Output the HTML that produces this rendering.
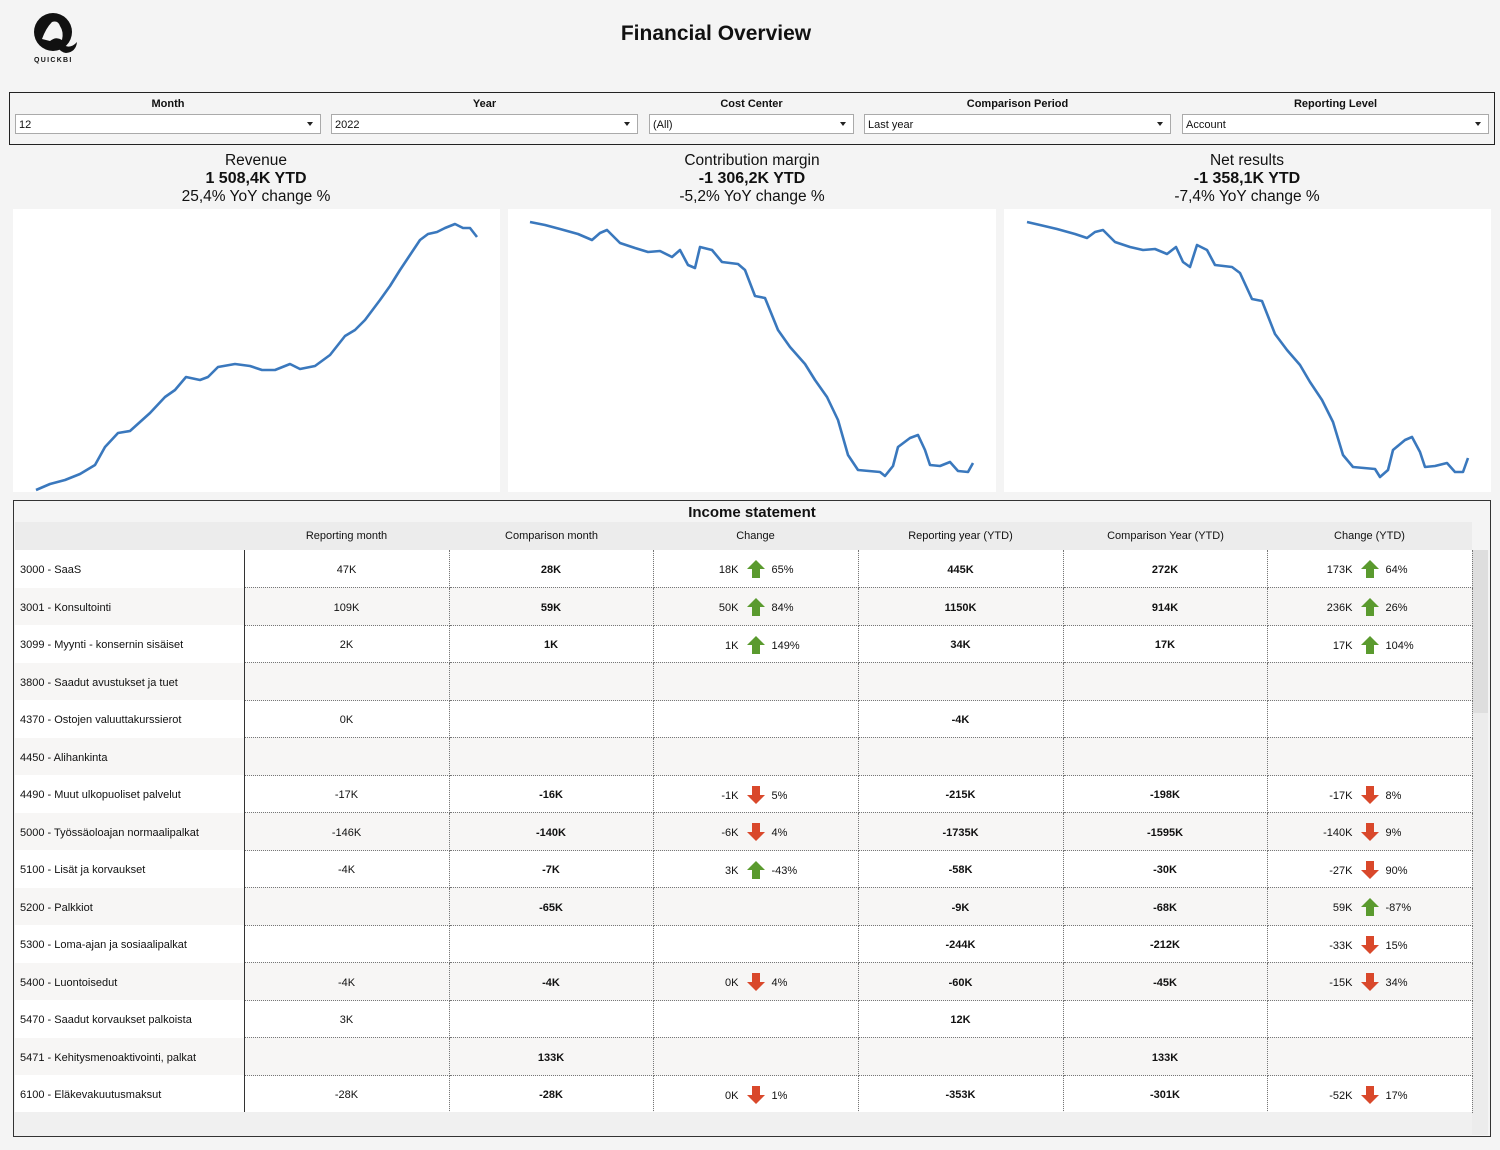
<!DOCTYPE html>
<html><head><meta charset="utf-8">
<style>
*{margin:0;padding:0;box-sizing:border-box}
body{width:1500px;height:1150px;background:#f4f4f4;font-family:"Liberation Sans","DejaVu Sans",sans-serif;color:#111;position:relative;overflow:hidden}
.abs{position:absolute}
.title{left:0;width:1432px;top:22px;text-align:center;font-weight:bold;font-size:21px}
.fbox{left:9px;top:92px;width:1486px;height:53px;border:1px solid #222;background:#f4f4f4}
.flab{position:absolute;top:5px;font-size:11px;font-weight:bold;text-align:center}
.dd{position:absolute;top:21px;height:20px;border:1px solid #aaa;background:#fff;font-size:11px;padding:4px 3px 0;}
.dd:after{content:"";position:absolute;right:7px;top:7px;border-left:3px solid transparent;border-right:3px solid transparent;border-top:4px solid #222}
.kpi{top:152px;width:400px;text-align:center;font-size:15.5px;line-height:18px}
.kpi b{font-size:16px}
.panel{top:209px;height:283px;background:#fff}
.tbox{left:13px;top:500px;width:1478px;height:637px;border:1px solid #333;background:#f4f4f4}
.hdr{left:15px;top:522px;width:1457px;height:28px;background:#ececec;font-size:11px}
.hdr div{position:absolute;top:8px;width:205px;text-align:center}
table{position:absolute;left:15px;top:550px;border-collapse:collapse;table-layout:fixed;width:1457px;font-size:11px}
td{height:37.5px;text-align:center;border-right:1px dotted #777;border-bottom:1px dotted #777;position:relative;padding-top:3px}
td.l{text-align:left;padding-left:5px;border-right:1.5px solid #333;border-bottom:none}
tr:nth-child(even) td{background:#f7f6f5}
tr:nth-child(odd) td{background:#fff}
td.b{font-weight:bold}
.c .v{position:absolute;right:calc(50% + 17px);top:14px}
.c .p{position:absolute;left:calc(50% + 16px);top:14px}
.c svg{position:absolute;left:calc(50% - 9px);top:10px}
</style></head><body>
<svg class="abs" style="left:32px;top:12px" width="48" height="42" viewBox="0 0 48 42">
<circle cx="21" cy="20" r="19" fill="#111"/>
<path d="M30 32 Q38 38 45 30 Q44 40 34 41 Q28 40 26 35Z" fill="#111"/>
<path d="M10 27 Q14 16 20 10 Q26 8 28 14 Q32 20 30 28 Q24 24 18 29Z" fill="#f4f4f4"/>
</svg>
<div class="abs" style="left:34px;top:57px;font-size:7px;font-weight:bold;letter-spacing:1.3px">QUICKBI</div>
<div class="abs title">Financial Overview</div>
<div class="abs fbox">
<div class="flab" style="left:5px;width:306px">Month</div>
<div class="dd" style="left:5px;width:306px">12</div>
<div class="flab" style="left:321px;width:307px">Year</div>
<div class="dd" style="left:321px;width:307px">2022</div>
<div class="flab" style="left:639px;width:205px">Cost Center</div>
<div class="dd" style="left:639px;width:205px">(All)</div>
<div class="flab" style="left:854px;width:307px">Comparison Period</div>
<div class="dd" style="left:854px;width:307px">Last year</div>
<div class="flab" style="left:1172px;width:307px">Reporting Level</div>
<div class="dd" style="left:1172px;width:307px">Account</div>
</div>
<div class="abs kpi" style="left:56px">Revenue<br><b>1 508,4K YTD</b><br>25,4% YoY change %</div>
<div class="abs kpi" style="left:552px">Contribution margin<br><b>-1 306,2K YTD</b><br>-5,2% YoY change %</div>
<div class="abs kpi" style="left:1047px">Net results<br><b>-1 358,1K YTD</b><br>-7,4% YoY change %</div>
<div class="abs panel" style="left:13px;width:487px"></div>
<div class="abs panel" style="left:508px;width:488px"></div>
<div class="abs panel" style="left:1004px;width:487px"></div>
<svg class="abs" style="left:0;top:0" width="1500" height="500">
<g fill="none" stroke="#3a78bd" stroke-width="2.6" stroke-linejoin="round">
<polyline points="36,490 50,484 65,480 80,474 95,465 105,447 118,433 130,431 150,413 165,397 175,390 186,377 200,380 208,377 218,367 235,364 250,366 262,370 275,370 290,364 300,369 315,366 330,355 345,336 355,330 365,320 380,300 390,286 400,270 410,255 420,240 428,234 437,232 445,228 455,224 463,228 470,228 477,237"/>
<polyline points="530,222 545,225 560,229 578,234 592,240 600,233 607,230 620,243 635,248 648,252 660,251 672,257 680,250 688,265 695,268 700,247 712,250 722,262 738,264 745,270 755,296 765,298 778,330 790,347 805,364 815,380 827,397 838,420 848,455 858,470 880,472 885,476 893,466 898,447 910,438 918,435 925,450 930,465 940,466 950,462 958,471 968,472 973,463"/>
<polyline points="1027,222 1040,225 1057,229 1075,234 1087,238 1095,232 1103,230 1115,242 1130,247 1143,250 1155,249 1167,254 1176,247 1183,262 1190,267 1197,245 1207,250 1215,265 1232,267 1240,273 1252,299 1262,301 1275,334 1287,350 1300,365 1310,382 1322,400 1333,422 1343,455 1353,467 1375,469 1380,477 1388,470 1393,450 1405,440 1412,437 1420,452 1425,467 1435,466 1447,463 1455,472 1463,472 1468,458"/>
</g></svg>
<div class="abs tbox"></div>
<div class="abs" style="left:13px;width:1478px;top:504px;text-align:center;font-weight:bold;font-size:15px">Income statement</div>
<div class="abs hdr">
<div style="left:229px">Reporting month</div>
<div style="left:434px">Comparison month</div>
<div style="left:638px">Change</div>
<div style="left:843px">Reporting year (YTD)</div>
<div style="left:1048px">Comparison Year (YTD)</div>
<div style="left:1252px">Change (YTD)</div>
</div>
<div class="abs" style="left:1472px;top:550px;width:16px;height:585px;background:#ececec"></div>
<div class="abs" style="left:1472px;top:550px;width:16px;height:163px;background:#dedede"></div>
<svg width="0" height="0" style="position:absolute"><defs>
<symbol id="up" viewBox="0 0 18 18"><polygon points="9,0 18,9 13,9 13,18 5,18 5,9 0,9" fill="#5a9a2e"/></symbol>
<symbol id="dn" viewBox="0 0 18 18"><polygon points="9,18 18,9 13,9 13,0 5,0 5,9 0,9" fill="#d9482b"/></symbol>
</defs></svg>
<table>
<colgroup><col style="width:229px"><col style="width:205px"><col style="width:204px"><col style="width:205px"><col style="width:205px"><col style="width:204px"><col style="width:205px"></colgroup>
<tr><td class="l">3000 - SaaS</td><td>47K</td><td class="b">28K</td><td class="c"><span class="v">18K</span><svg width="18" height="18"><use href="#up"/></svg><span class="p">65%</span></td><td class="b">445K</td><td class="b">272K</td><td class="c"><span class="v">173K</span><svg width="18" height="18"><use href="#up"/></svg><span class="p">64%</span></td></tr>
<tr><td class="l">3001 - Konsultointi</td><td>109K</td><td class="b">59K</td><td class="c"><span class="v">50K</span><svg width="18" height="18"><use href="#up"/></svg><span class="p">84%</span></td><td class="b">1150K</td><td class="b">914K</td><td class="c"><span class="v">236K</span><svg width="18" height="18"><use href="#up"/></svg><span class="p">26%</span></td></tr>
<tr><td class="l">3099 - Myynti - konsernin sisäiset</td><td>2K</td><td class="b">1K</td><td class="c"><span class="v">1K</span><svg width="18" height="18"><use href="#up"/></svg><span class="p">149%</span></td><td class="b">34K</td><td class="b">17K</td><td class="c"><span class="v">17K</span><svg width="18" height="18"><use href="#up"/></svg><span class="p">104%</span></td></tr>
<tr><td class="l">3800 - Saadut avustukset ja tuet</td><td></td><td></td><td></td><td></td><td></td><td></td></tr>
<tr><td class="l">4370 - Ostojen valuuttakurssierot</td><td>0K</td><td></td><td></td><td class="b">-4K</td><td></td><td></td></tr>
<tr><td class="l">4450 - Alihankinta</td><td></td><td></td><td></td><td></td><td></td><td></td></tr>
<tr><td class="l">4490 - Muut ulkopuoliset palvelut</td><td>-17K</td><td class="b">-16K</td><td class="c"><span class="v">-1K</span><svg width="18" height="18"><use href="#dn"/></svg><span class="p">5%</span></td><td class="b">-215K</td><td class="b">-198K</td><td class="c"><span class="v">-17K</span><svg width="18" height="18"><use href="#dn"/></svg><span class="p">8%</span></td></tr>
<tr><td class="l">5000 - Työssäoloajan normaalipalkat</td><td>-146K</td><td class="b">-140K</td><td class="c"><span class="v">-6K</span><svg width="18" height="18"><use href="#dn"/></svg><span class="p">4%</span></td><td class="b">-1735K</td><td class="b">-1595K</td><td class="c"><span class="v">-140K</span><svg width="18" height="18"><use href="#dn"/></svg><span class="p">9%</span></td></tr>
<tr><td class="l">5100 - Lisät ja korvaukset</td><td>-4K</td><td class="b">-7K</td><td class="c"><span class="v">3K</span><svg width="18" height="18"><use href="#up"/></svg><span class="p">-43%</span></td><td class="b">-58K</td><td class="b">-30K</td><td class="c"><span class="v">-27K</span><svg width="18" height="18"><use href="#dn"/></svg><span class="p">90%</span></td></tr>
<tr><td class="l">5200 - Palkkiot</td><td></td><td class="b">-65K</td><td></td><td class="b">-9K</td><td class="b">-68K</td><td class="c"><span class="v">59K</span><svg width="18" height="18"><use href="#up"/></svg><span class="p">-87%</span></td></tr>
<tr><td class="l">5300 - Loma-ajan ja sosiaalipalkat</td><td></td><td></td><td></td><td class="b">-244K</td><td class="b">-212K</td><td class="c"><span class="v">-33K</span><svg width="18" height="18"><use href="#dn"/></svg><span class="p">15%</span></td></tr>
<tr><td class="l">5400 - Luontoisedut</td><td>-4K</td><td class="b">-4K</td><td class="c"><span class="v">0K</span><svg width="18" height="18"><use href="#dn"/></svg><span class="p">4%</span></td><td class="b">-60K</td><td class="b">-45K</td><td class="c"><span class="v">-15K</span><svg width="18" height="18"><use href="#dn"/></svg><span class="p">34%</span></td></tr>
<tr><td class="l">5470 - Saadut korvaukset palkoista</td><td>3K</td><td></td><td></td><td class="b">12K</td><td></td><td></td></tr>
<tr><td class="l">5471 - Kehitysmenoaktivointi, palkat</td><td></td><td class="b">133K</td><td></td><td></td><td class="b">133K</td><td></td></tr>
<tr><td class="l">6100 - Eläkevakuutusmaksut</td><td>-28K</td><td class="b">-28K</td><td class="c"><span class="v">0K</span><svg width="18" height="18"><use href="#dn"/></svg><span class="p">1%</span></td><td class="b">-353K</td><td class="b">-301K</td><td class="c"><span class="v">-52K</span><svg width="18" height="18"><use href="#dn"/></svg><span class="p">17%</span></td></tr>
</table>
<div class="abs" style="left:14px;top:1112px;width:1458px;height:24px;background:#f0f0f0"></div>
</body></html>
